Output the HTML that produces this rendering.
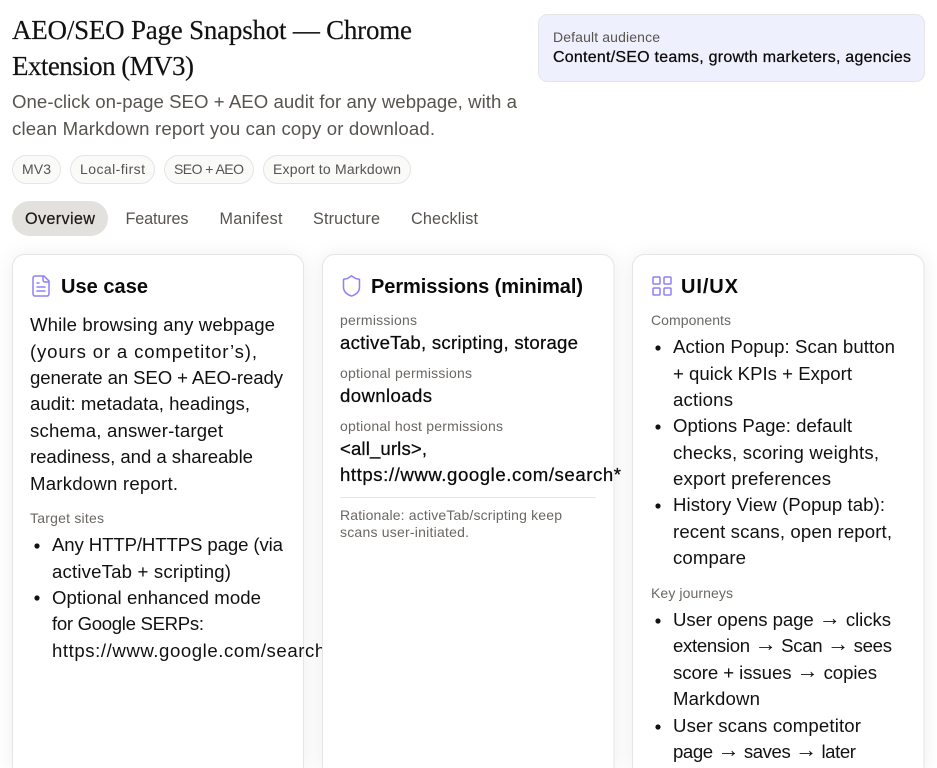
<!DOCTYPE html>
<html lang="en"><head><meta charset="utf-8"><title>AEO/SEO Page Snapshot</title>
<style>
html,body{margin:0;padding:0;background:#fff;width:937px;height:768px;overflow:hidden}
svg{display:block}
text{font-family:"Liberation Sans",Arial,sans-serif;white-space:pre}
.t{font-family:"Liberation Serif",serif;font-size:27px;fill:#111;stroke:#111;stroke-width:.15}
.s{font-size:18.6px;fill:#57534e}
.chip{font-size:14px;fill:#57534e}
.tab{font-size:16.2px;fill:#57534e}
.l{font-size:14px;fill:#6b6763}
.b{font-size:18.6px;fill:#111}
.m{font-size:18.6px;fill:#0c0a09;stroke:#0c0a09;stroke-width:.25}
.h{font-size:20px;font-weight:700;fill:#0c0a09}
.ar{font-size:22px}
.ic{fill:none;stroke:#8b80f9;stroke-width:1.5;stroke-linecap:round;stroke-linejoin:round}
.card{fill:#fff;stroke:#e7e5e4;stroke-width:1;filter:url(#sh)}
</style></head><body>
<svg width="937" height="768" viewBox="0 0 937 768" xmlns="http://www.w3.org/2000/svg">
<defs><filter id="sh" x="-20%" y="-20%" width="140%" height="140%"><feDropShadow dx="0" dy="1" stdDeviation="9" flood-color="#000" flood-opacity=".07"/></filter></defs>

<text class="t" x="12" y="39" textLength="400" lengthAdjust="spacing">AEO/SEO Page Snapshot — Chrome</text>
<text class="t" x="12" y="75" textLength="182" lengthAdjust="spacing">Extension (MV3)</text>
<text class="s" x="12" y="108" textLength="505" lengthAdjust="spacing">One-click on-page SEO + AEO audit for any webpage, with a</text>
<text class="s" x="12" y="135" textLength="423" lengthAdjust="spacing">clean Markdown report you can copy or download.</text>

<rect x="538.5" y="14.5" width="386" height="67" rx="9" fill="#eff0fd" stroke="#e7e5e4"/>
<text class="l" x="553" y="42" textLength="107" lengthAdjust="spacing" style="fill:#57534e">Default audience</text>
<text class="m" x="553" y="62" textLength="358" lengthAdjust="spacing" style="font-size:16px">Content/SEO teams, growth marketers, agencies</text>

<g fill="#fafaf9" stroke="#e7e5e4">
<rect x="12.5" y="155.5" width="48" height="28" rx="14"/>
<rect x="70.5" y="155.5" width="84" height="28" rx="14"/>
<rect x="164.5" y="155.5" width="89" height="28" rx="14"/>
<rect x="263.5" y="155.5" width="147" height="28" rx="14"/>
</g>
<text class="chip" x="22" y="174" textLength="29" lengthAdjust="spacing">MV3</text>
<text class="chip" x="80" y="174" textLength="65" lengthAdjust="spacing">Local-first</text>
<text class="chip" x="174" y="174" textLength="70" lengthAdjust="spacing">SEO + AEO</text>
<text class="chip" x="273" y="174" textLength="128" lengthAdjust="spacing">Export to Markdown</text>

<rect x="12" y="201" width="96" height="35" rx="17.5" fill="#e2e1dd"/>
<text class="tab" x="25" y="224" textLength="70" lengthAdjust="spacing" style="fill:#1c1917;stroke:#1c1917;stroke-width:.2">Overview</text>
<text class="tab" x="125.5" y="224" textLength="63" lengthAdjust="spacing">Features</text>
<text class="tab" x="219.5" y="224" textLength="63" lengthAdjust="spacing">Manifest</text>
<text class="tab" x="313" y="224" textLength="67" lengthAdjust="spacing">Structure</text>
<text class="tab" x="411" y="224" textLength="67" lengthAdjust="spacing">Checklist</text>

<!-- Card 1 -->
<path class="card" d="M12.5 768V266.5a12 12 0 0 1 12-12h267a12 12 0 0 1 12 12V768"/>
<g transform="translate(29 274)" class="ic"><path d="M15 2H6a2 2 0 0 0-2 2v16a2 2 0 0 0 2 2h12a2 2 0 0 0 2-2V7z"/><path d="M14 2v4a2 2 0 0 0 2 2h4"/><path d="M10 9H8"/><path d="M16 13H8"/><path d="M16 17H8"/></g>
<text class="h" x="61" y="293" textLength="87" lengthAdjust="spacing">Use case</text>
<text class="b" x="30" y="331" textLength="245" lengthAdjust="spacing">While browsing any webpage</text>
<text class="b" x="30" y="358" textLength="227" lengthAdjust="spacing">(yours or a competitor’s),</text>
<text class="b" x="30" y="384" textLength="253" lengthAdjust="spacing">generate an SEO + AEO-ready</text>
<text class="b" x="30" y="410" textLength="220" lengthAdjust="spacing">audit: metadata, headings,</text>
<text class="b" x="30" y="437" textLength="193" lengthAdjust="spacing">schema, answer-target</text>
<text class="b" x="30" y="463" textLength="223" lengthAdjust="spacing">readiness, and a shareable</text>
<text class="b" x="30" y="490" textLength="148" lengthAdjust="spacing">Markdown report.</text>
<text class="l" x="30" y="523" textLength="74" lengthAdjust="spacing">Target sites</text>
<circle cx="37" cy="546" r="2.6" fill="#111"/>
<text class="b" x="52" y="551" textLength="231" lengthAdjust="spacing">Any HTTP/HTTPS page (via</text>
<text class="b" x="52" y="578" textLength="179" lengthAdjust="spacing">activeTab + scripting)</text>
<circle cx="37" cy="598" r="2.6" fill="#111"/>
<text class="b" x="52" y="604" textLength="209" lengthAdjust="spacing">Optional enhanced mode</text>
<text class="b" x="52" y="630" textLength="152" lengthAdjust="spacing">for Google SERPs:</text>
<text class="b" x="52" y="657" textLength="281" lengthAdjust="spacing">https://www.google.com/search*</text>

<!-- Card 2 -->
<path class="card" d="M322.5 768V266.5a12 12 0 0 1 12-12h267.5a12 12 0 0 1 12 12V768"/>
<g transform="translate(339.5 274)" class="ic"><path d="M20 13c0 5-3.5 7.5-7.66 8.95a1 1 0 0 1-.67-.01C7.5 20.5 4 18 4 13V6a1 1 0 0 1 1-1c2 0 4.5-1.2 6.24-2.72a1.17 1.17 0 0 1 1.52 0C14.51 3.81 17 5 19 5a1 1 0 0 1 1 1z"/></g>
<text class="h" x="371" y="293" textLength="212" lengthAdjust="spacing">Permissions (minimal)</text>
<text class="l" x="340" y="325" textLength="77" lengthAdjust="spacing">permissions</text>
<text class="m" x="340" y="349" textLength="238" lengthAdjust="spacing">activeTab, scripting, storage</text>
<text class="l" x="340" y="378" textLength="132" lengthAdjust="spacing">optional permissions</text>
<text class="m" x="340" y="402" textLength="92" lengthAdjust="spacing">downloads</text>
<text class="l" x="340" y="431" textLength="163" lengthAdjust="spacing">optional host permissions</text>
<text class="m" x="340" y="455" textLength="87" lengthAdjust="spacing">&lt;all_urls&gt;,</text>
<text class="m" x="340" y="481" textLength="281" lengthAdjust="spacing">https://www.google.com/search*</text>
<rect x="340" y="497" width="256" height="1" fill="#e7e5e4"/>
<text class="l" x="340" y="520" textLength="222" lengthAdjust="spacing">Rationale: activeTab/scripting keep</text>
<text class="l" x="340" y="537" textLength="129" lengthAdjust="spacing">scans user-initiated.</text>

<!-- Card 3 -->
<path class="card" d="M632.5 768V266.5a12 12 0 0 1 12-12h267.5a12 12 0 0 1 12 12V768"/>
<g transform="translate(650 274)" class="ic"><rect x="3" y="3" width="7" height="7" rx="1"/><rect x="14" y="3" width="7" height="7" rx="1"/><rect x="14" y="14" width="7" height="7" rx="1"/><rect x="3" y="14" width="7" height="7" rx="1"/></g>
<text class="h" x="681" y="293" textLength="57" lengthAdjust="spacing">UI/UX</text>
<text class="l" x="651" y="325" textLength="80" lengthAdjust="spacing">Components</text>
<circle cx="658" cy="348" r="2.6" fill="#111"/>
<text class="b" x="673" y="353" textLength="222" lengthAdjust="spacing">Action Popup: Scan button</text>
<text class="b" x="673" y="380" textLength="179" lengthAdjust="spacing">+ quick KPIs + Export</text>
<text class="b" x="673" y="406" textLength="60" lengthAdjust="spacing">actions</text>
<circle cx="658" cy="427" r="2.6" fill="#111"/>
<text class="b" x="673" y="432" textLength="179" lengthAdjust="spacing">Options Page: default</text>
<text class="b" x="673" y="459" textLength="206" lengthAdjust="spacing">checks, scoring weights,</text>
<text class="b" x="673" y="485" textLength="158" lengthAdjust="spacing">export preferences</text>
<circle cx="658" cy="506" r="2.6" fill="#111"/>
<text class="b" x="673" y="511" textLength="212" lengthAdjust="spacing">History View (Popup tab):</text>
<text class="b" x="673" y="538" textLength="219" lengthAdjust="spacing">recent scans, open report,</text>
<text class="b" x="673" y="564" textLength="73" lengthAdjust="spacing">compare</text>
<text class="l" x="651" y="598" textLength="82" lengthAdjust="spacing">Key journeys</text>
<circle cx="658" cy="621" r="2.6" fill="#111"/>
<text class="b" x="673" y="626" textLength="218" lengthAdjust="spacing">User opens page <tspan class="ar" dy="-1">→</tspan><tspan dy="1"> clicks</tspan></text>
<text class="b" x="673" y="652" textLength="219" lengthAdjust="spacing">extension <tspan class="ar" dy="-1">→</tspan><tspan dy="1"> Scan </tspan><tspan class="ar" dy="-1">→</tspan><tspan dy="1"> sees</tspan></text>
<text class="b" x="673" y="679" textLength="204" lengthAdjust="spacing">score + issues <tspan class="ar" dy="-1">→</tspan><tspan dy="1"> copies</tspan></text>
<text class="b" x="673" y="705" textLength="87" lengthAdjust="spacing">Markdown</text>
<circle cx="658" cy="727" r="2.6" fill="#111"/>
<text class="b" x="673" y="732" textLength="188" lengthAdjust="spacing">User scans competitor</text>
<text class="b" x="673" y="758" textLength="183" lengthAdjust="spacing">page <tspan class="ar" dy="-1">→</tspan><tspan dy="1"> saves </tspan><tspan class="ar" dy="-1">→</tspan><tspan dy="1"> later</tspan></text>
</svg>
</body></html>
